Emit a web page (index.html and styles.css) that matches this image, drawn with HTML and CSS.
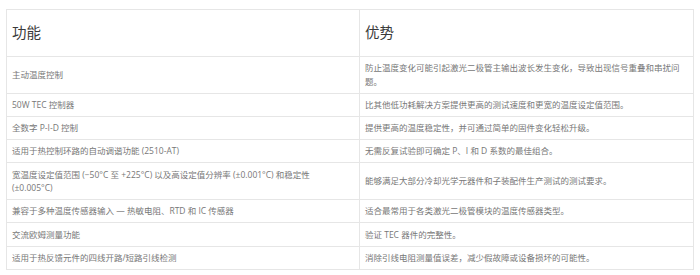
FILE: index.html
```html
<!DOCTYPE html>
<html lang="zh-CN">
<head>
<meta charset="utf-8">
<link rel="stylesheet" href="styles.css">
</head>
<body>
<table class="spec">
  <colgroup><col class="c1"><col class="c2"></colgroup>
  <thead>
    <tr><th>功能</th><th>优势</th></tr>
  </thead>
  <tbody>
    <tr><td>主动温度控制</td><td>防止温度变化可能引起激光二极管主输出波长发生变化，导致出现信号重叠和串扰问题。</td></tr>
    <tr><td>50W TEC 控制器</td><td>比其他低功耗解决方案提供更高的测试速度和更宽的温度设定值范围。</td></tr>
    <tr><td>全数字 P-I-D 控制</td><td>提供更高的温度稳定性，并可通过简单的固件变化轻松升级。</td></tr>
    <tr><td>适用于热控制环路的自动调谐功能 (2510-AT)</td><td>无需反复试验即可确定 P、I 和 D 系数的最佳组合。</td></tr>
    <tr><td>宽温度设定值范围 (−50°C 至 +225°C) 以及高设定值分辨率 (±0.001°C) 和稳定性 (±0.005°C)</td><td>能够满足大部分冷却光学元器件和子装配件生产测试的测试要求。</td></tr>
    <tr><td>兼容于多种温度传感器输入 — 热敏电阻、RTD 和 IC 传感器</td><td>适合最常用于各类激光二极管模块的温度传感器类型。</td></tr>
    <tr><td>交流欧姆测量功能</td><td>验证 TEC 器件的完整性。</td></tr>
    <tr><td>适用于热反馈元件的四线开路/短路引线检测</td><td>消除引线电阻测量值误差，减少假故障或设备损坏的可能性。</td></tr>
  </tbody>
</table>
</body>
</html>
```
FILE: styles.css
```css
html, body {
  margin: 0;
  padding: 0;
  background: #ffffff;
}
body {
  padding: 9px 0 0 6px;
  font-family: "Open Sans", "Noto Sans CJK SC", sans-serif;
}
.spec {
  border-collapse: collapse;
  table-layout: fixed;
  width: 687px;
  border: 1px solid #e8e8e8;
}
.c1 { width: 353px; }
.c2 { width: 334px; }
.spec th {
  font-weight: normal;
  text-align: left;
  font-size: 14.5px;
  line-height: 20px;
  color: #3a3a3a;
  padding: 13px 5px 13px 5px;
  border: 1px solid #e6e6e6;
  vertical-align: middle;
}
.spec td {
  font-size: 8.5px;
  line-height: 13.6px;
  color: #777777;
  padding: 4.3px 12px 4.3px 5px;
  border: 1px solid #e6e6e6;
  vertical-align: middle;
}
```
